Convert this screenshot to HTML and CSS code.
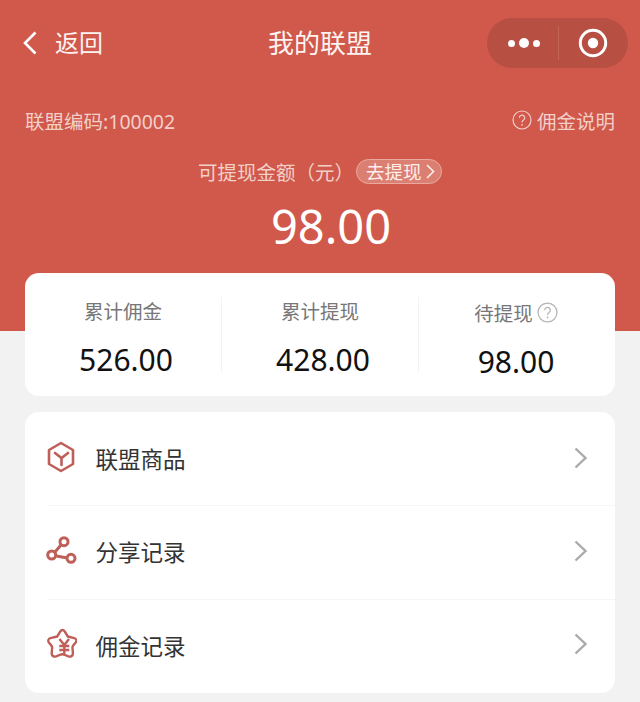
FILE: index.html
```html
<!DOCTYPE html>
<html lang="zh-CN">
<head>
<meta charset="utf-8">
<title>我的联盟</title>
<link rel="stylesheet" href="styles.css">
</head>
<body>
<div class="page">
  <header class="hero">
    <nav class="nav">
      <div class="back">
        <svg class="back-icon" width="14" height="24" viewBox="0 0 14 24"><path d="M12.5 1.5 2 12l10.500 10.500" fill="none" stroke="#fff" stroke-width="2.600"/></svg>
        <span>返回</span>
      </div>
      <div class="title">我的联盟</div>
      <div class="capsule">
        <div class="dots"><i class="dot"></i><i class="dot big"></i><i class="dot"></i></div>
        <div class="capsule-line"></div>
        <svg class="target" width="30" height="30" viewBox="0 0 30 30"><circle cx="15" cy="15" r="12.700" fill="none" stroke="#fff" stroke-width="3"/><circle cx="15" cy="15" r="5.200" fill="#fff"/></svg>
      </div>
    </nav>
    <div class="meta">
      <span>联盟编码:100002</span>
      <span class="explain">
        <svg width="20" height="20" viewBox="0 0 20 20"><circle cx="10" cy="10" r="9" fill="none" stroke="currentColor" stroke-width="1.200"/><path d="M7.300 7.800a2.700 2.700 0 1 1 4.200 2.200c-1 .7-1.500 1.200-1.500 2.400" fill="none" stroke="currentColor" stroke-width="1.200"/><circle cx="10" cy="14.800" r=".9" fill="currentColor"/></svg>
        <span>佣金说明</span>
      </span>
    </div>
    <div class="avail">
      <span>可提现金额（元）</span>
      <span class="pill">去提现
        <svg width="9" height="15" viewBox="0 0 9 15"><path d="M1 1l6.500 6.500L1 14" fill="none" stroke="currentColor" stroke-width="1.600"/></svg>
      </span>
    </div>
    <div class="amount">98.00</div>
  </header>

  <main class="content">
    <section class="card stats">
      <div class="stat">
        <div class="stat-label">累计佣金</div>
        <div class="stat-value">526.00</div>
      </div>
      <div class="stat">
        <div class="stat-label">累计提现</div>
        <div class="stat-value">428.00</div>
      </div>
      <div class="stat stat-last">
        <div class="stat-label">待提现
          <svg width="21" height="21" viewBox="0 0 20 20"><circle cx="10" cy="10" r="9" fill="none" stroke="#b5b5b5" stroke-width="1.200"/><path d="M7.300 7.800a2.700 2.700 0 1 1 4.200 2.200c-1 .7-1.500 1.200-1.500 2.400" fill="none" stroke="#b5b5b5" stroke-width="1.200"/><circle cx="10" cy="14.800" r=".9" fill="#b5b5b5"/></svg>
        </div>
        <div class="stat-value">98.00</div>
      </div>
    </section>

    <section class="card menu">
      <div class="row">
        <svg class="row-icon row-icon-hex" width="32" height="32" viewBox="0 0 32 32" fill="none" stroke="#bf5f58" stroke-width="2.600"><path d="M16 2 28 9V23L16 30 4 23V9z" stroke-linejoin="round"/><path d="M10 12l6.500 5 6.500-5M16.500 17v7" stroke-linecap="round"/></svg>
        <span class="row-text">联盟商品</span>
        <svg class="row-arrow" width="14" height="22" viewBox="0 0 14 22"><path d="M1.500 1.500 11.500 11l-10 9.500" fill="none" stroke="#aaa" stroke-width="2.400"/></svg>
      </div>
      <div class="row">
        <svg class="row-icon row-icon-share" width="32" height="32" viewBox="0 0 32 32" fill="none" stroke="#bf5f58" stroke-width="3"><circle cx="19" cy="6.700" r="4"/><circle cx="6.700" cy="20" r="4"/><circle cx="26" cy="23.300" r="4"/><path d="M16 10 10 17M11.500 21 21 22.700"/></svg>
        <span class="row-text">分享记录</span>
        <svg class="row-arrow" width="14" height="22" viewBox="0 0 14 22"><path d="M1.500 1.500 11.500 11l-10 9.500" fill="none" stroke="#aaa" stroke-width="2.400"/></svg>
      </div>
      <div class="row">
        <svg class="row-icon row-icon-star" width="32" height="32" viewBox="0 0 32 32" fill="none" stroke="#bf5f58" stroke-width="2.400"><path d="M15.500 3.200c1-1.600 3-1.600 4 0L22.800 8.500 29.300 10.200c2 .5 2.700 2.800 1.400 4.400l-2.500 3c-.6.7-.8 1.500-.7 2.400l.4 5c.2 2.600-2 4.200-4.400 3.400l-4.800-1.900c-.9-.3-1.900-.3-2.800 0l-4.800 1.900c-2.400.8-4.600-.8-4.400-3.400l.4-5c.1-.9-.1-1.700-.7-2.400l-2.500-3c-1.300-1.600-.6-3.900 1.400-4.400L12.200 8.500z" stroke-linejoin="round"/><path d="M14.500 11 19.300 17 24 11M19.300 17v9M14.300 18h10M14.300 22h10"/></svg>
        <span class="row-text">佣金记录</span>
        <svg class="row-arrow" width="14" height="22" viewBox="0 0 14 22"><path d="M1.500 1.500 11.500 11l-10 9.500" fill="none" stroke="#aaa" stroke-width="2.400"/></svg>
      </div>
    </section>
  </main>
</div>
</body>
</html>
```
FILE: styles.css
```css
* { box-sizing: border-box; }
html, body { margin: 0; padding: 0; }
body {
  background: #f2f2f2;
  font-family: "Noto Sans", "Noto Sans CJK SC", sans-serif;
  overflow: hidden;
}
.page { width: 640px; height: 702px; }

.hero {
  height: 331px;
  padding: 18px 12px 0 23px;
  background: #d0594b;
  color: #fff;
}
.nav { display: flex; align-items: center; height: 50px; position: relative; }
.back {
  display: flex;
  align-items: center;
  gap: 18px;
  font-size: 24px;
  line-height: 30px;
  color: #fdf3f1;
}
.title {
  position: absolute;
  left: 245px;
  width: 104px;
  font-size: 26px;
  line-height: 34px;
  white-space: nowrap;
  color: #fdf3f1;
}
.capsule {
  margin-left: auto;
  width: 141px;
  height: 50px;
  display: flex;
  align-items: center;
  padding-left: 21px;
  border-radius: 25px;
  background: #b84f43;
}
.dots { display: flex; align-items: center; gap: 4px; }
.dot { width: 7px; height: 7px; border-radius: 50%; background: #fff; }
.dot.big { width: 10px; height: 10px; }
.capsule-line { width: 1px; height: 34px; margin-left: 18px; background: #c4655a; }
.target { margin-left: 19px; }

.meta {
  display: flex;
  justify-content: space-between;
  align-items: center;
  margin: 38px 0 0 2px;
  height: 28px;
  padding-right: 13px;
  font-size: 19.500px;
  color: #f3cfc9;
}
.explain { display: flex; align-items: center; gap: 5px; }

.avail {
  display: flex;
  align-items: center;
  margin: 24px 0 0 175px;
  height: 26px;
  font-size: 19.500px;
  color: #f3cfc9;
}
.pill {
  display: flex;
  align-items: center;
  gap: 4px;
  width: 86px;
  height: 25px;
  margin-left: 2px;
  padding-left: 9px;
  border: 1px solid #eaa99f;
  border-radius: 13px;
  background: #db7f73;
  color: #fdeeeb;
  font-size: 18.500px;
}
.amount {
  margin-top: 11px;
  padding-left: 11px;
  font-size: 47px;
  line-height: 62px;
  text-align: center;
  color: #fff;
}

.content {
  display: flex;
  flex-direction: column;
  gap: 16px;
  margin-top: -58px;
  padding: 0 25px;
}
.card { background: #fff; border-radius: 14px; }
.stats {
  display: grid;
  grid-template-columns: 197px 197px 196px;
  height: 123px;
  padding: 24px 0;
}
.stat {
  height: 75px;
  border-right: 1px solid #f3f3f3;
  text-align: center;
}
.stat-last { border-right: 0; padding-right: 2px; }
.stat-label {
  display: flex;
  align-items: center;
  justify-content: center;
  gap: 4px;
  height: 30px;
  margin-top: -2px;
  font-size: 19.500px;
  color: #777;
}
.stat-value {
  margin-top: 14px;
  padding-left: 6px;
  font-size: 30px;
  line-height: 42px;
  color: #111;
}
.stat-last .stat-label { margin-top: 0; }
.stat-last .stat-value { padding-left: 0; }

.menu { height: 281px; padding-left: 22px; }
.row {
  display: flex;
  align-items: center;
  height: 94px;
  padding-right: 27px;
  border-bottom: 1px solid #f6f6f6;
}
.row:nth-child(2) { padding-bottom: 2px; }
.row:last-child { height: 93px; padding-bottom: 3px; border-bottom: 0; }
.row-icon { flex: none; margin-left: -2px; }
.row-icon-hex { margin-top: -4px; }
.row-icon-share { margin-top: -2px; }
.row-icon-star { margin-top: -3px; }
.row-text {
  margin-left: 18.500px;
  font-size: 22.500px;
  color: #333;
}
.row-arrow { margin-left: auto; margin-top: -2px; }
```
